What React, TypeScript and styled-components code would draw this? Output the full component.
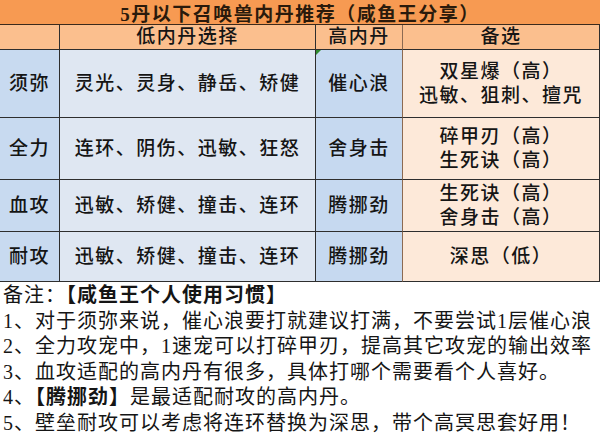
import styled, { createGlobalStyle } from 'styled-components'

const GlobalStyle = createGlobalStyle`
  html, body {
    margin: 0;
    padding: 0;
    background: #fff;
  }
`

type Tone = 'head' | 'label' | 'body' | 'high' | 'alt'

const rows = [
  { name: '须弥', low: '灵光、灵身、静岳、矫健', high: '催心浪', alt: ['双星爆（高）', '迅敏、狙刺、擅咒'], mark: true },
  { name: '全力', low: '连环、阴伤、迅敏、狂怒', high: '舍身击', alt: ['碎甲刃（高）', '生死诀（高）'] },
  { name: '血攻', low: '迅敏、矫健、撞击、连环', high: '腾挪劲', alt: ['生死诀（高）', '舍身击（高）'] },
  { name: '耐攻', low: '迅敏、矫健、撞击、连环', high: '腾挪劲', alt: ['深思（低）'] },
]

export default function App() {
  return (
    <>
      <GlobalStyle />
      <Sheet lang="zh-CN">
        <Title>5丹以下召唤兽内丹推荐（咸鱼王分享）</Title>
        <Table>
          <Cell $tone="head" />
          <Cell $tone="head">低内丹选择</Cell>
          <Cell $tone="head" $soft>高内丹</Cell>
          <Cell $tone="head">备选</Cell>
          {rows.map((r) => (
            <Row key={r.name}>
              <Cell $tone="label">{r.name}</Cell>
              <Cell $tone="body">{r.low}</Cell>
              <Cell $tone="high" $soft>
                {r.mark && <ErrorMark />}
                {r.high}
              </Cell>
              <Cell $tone="alt">
                {r.alt.map((a) => (
                  <AltLine key={a}>{a}</AltLine>
                ))}
              </Cell>
            </Row>
          ))}
        </Table>
        <Notes>
          <NoteLine>备注：<Strong>【咸鱼王个人使用习惯】</Strong></NoteLine>
          <NoteLine>1、对于须弥来说，催心浪要打就建议打满，不要尝试1层催心浪</NoteLine>
          <NoteLine>2、全力攻宠中，1速宠可以打碎甲刃，提高其它攻宠的输出效率</NoteLine>
          <NoteLine>3、血攻适配的高内丹有很多，具体打哪个需要看个人喜好。</NoteLine>
          <NoteLine>4、<Strong>【腾挪劲】</Strong>是最适配耐攻的高内丹。</NoteLine>
          <NoteLine>5、壁垒耐攻可以考虑将连环替换为深思，带个高冥思套好用！</NoteLine>
        </Notes>
      </Sheet>
    </>
  )
}

const Sheet = styled.div`
  width: 600px;
  height: 437px;
  overflow: hidden;
  font-family: "Liberation Serif", "Noto Sans CJK SC", sans-serif;
  color: #151515;
`
const Title = styled.div`
  height: 25px;
  box-sizing: border-box;
  display: flex;
  align-items: center;
  justify-content: center;
  background: #f79a52;
  border-bottom: 1px solid #3b2a1c;
  font-size: 19px;
  font-weight: 700;
  letter-spacing: 1.5px;
  color: #2a1a0c;
`
const Table = styled.div`
  display: grid;
  grid-template-columns: 60px 256px 87px 197px;
  grid-template-rows: 25px 68px 62px 52px 50px;
`
// a row is just a grouping; its cells sit straight in the grid
const Row = styled.div`
  display: contents;
`
const toneBg: Record<Tone, string> = {
  head: '#fbbf8e',
  label: '#c8daf0',
  body: '#dfe7f2',
  high: '#c6d9f0',
  alt: '#fde9d9',
}
const Cell = styled.div<{ $tone: Tone; $soft?: boolean }>`
  position: relative;
  box-sizing: border-box;
  display: flex;
  flex-direction: column;
  align-items: center;
  justify-content: center;
  background: ${(p) => toneBg[p.$tone]};
  border-right: 1px solid ${(p) => (p.$soft ? '#8c6a52' : '#2e2e2e')};
  border-bottom: 1px solid #2e2e2e;
  font-size: 19px;
  font-weight: 500;
  letter-spacing: 1.5px;
  line-height: 24px;
  white-space: nowrap;
`
const AltLine = styled.div`
  line-height: 24px;
`
const ErrorMark = styled.span`
  position: absolute;
  top: 0;
  left: 0;
  width: 0;
  height: 0;
  border-top: 5px solid #2e8b2e;
  border-right: 5px solid transparent;
`
const Notes = styled.div`
  padding: 1px 0 0 3px;
  font-size: 20px;
  letter-spacing: 1px;
  line-height: 25.5px;
  white-space: nowrap;
`
const NoteLine = styled.div``
const Strong = styled.span`
  font-weight: 700;
`
